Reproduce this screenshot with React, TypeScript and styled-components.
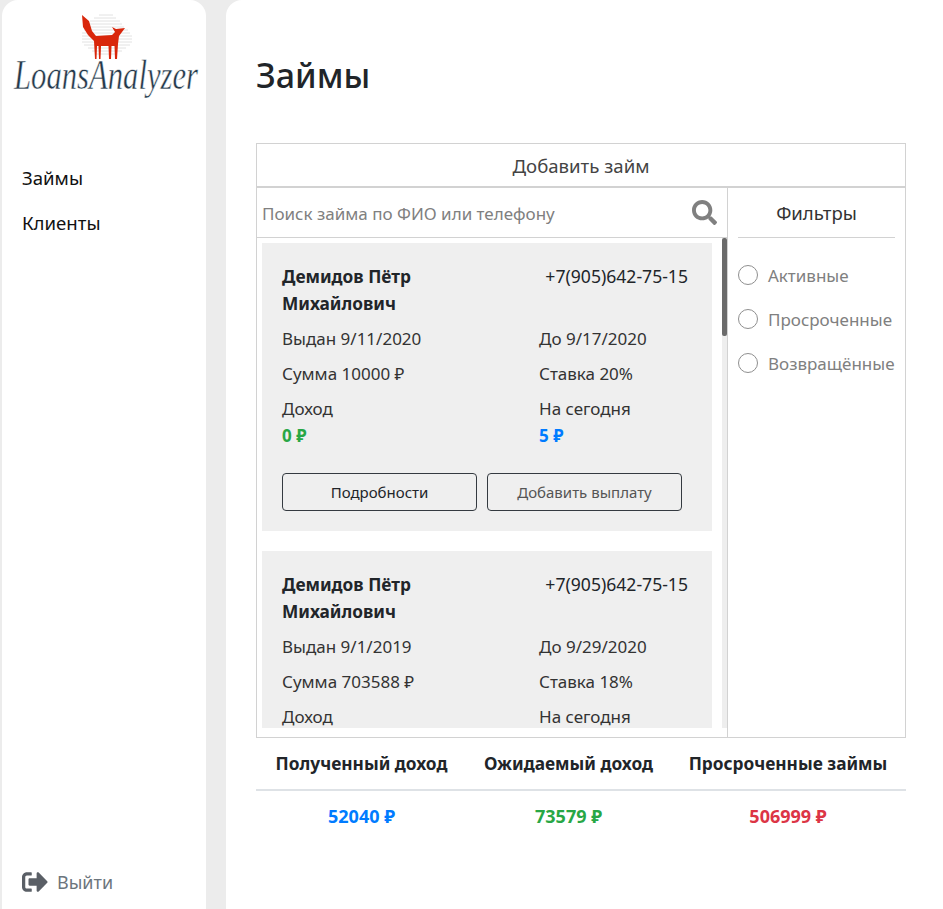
import styled, { createGlobalStyle } from 'styled-components'
import { FaSearch, FaSignOutAlt } from 'react-icons/fa'

const loans = [
	{ id: 1, issued: '9/11/2020', until: '9/17/2020', sum: 10000, rate: 20, income: 0, today: 5 },
	{ id: 2, issued: '9/1/2019', until: '9/29/2020', sum: 703588, rate: 18, income: 0, today: 12 },
]

const filters = ['Активные', 'Просроченные', 'Возвращённые']

function Logo() {
	return (
		<S.LogoSvg viewBox="0 0 204 110" aria-label="LoansAnalyzer">
			<g stroke="#e2e2e2" strokeWidth="1">
				<path d="M97 15h14M92 18h22M88 21h30M86 24h34M84 27h38M82 30h44M80 33h48M80 36h50M80 39h50M80 42h50M82 45h46M86 48h38M90 51h30M94 54h20" />
			</g>
			<path
				fill="#d9260b"
				d="M80 15 L87 21 L90 31 L94 36 L110 35 L113 32 L110 27 L114 29 L123 28 L117 36 L116 44 L115 59 L113 59 L112.5 46 L109.5 46 L109 59 L107 59 L106.5 46 L99 46 L98.5 59 L97 59 L96.5 46 L95 46 L94.5 59 L93 59 L92 41 L86 35 L81 27 Z"
			/>
			<S.LogoText x="12" y="89" textLength="184" lengthAdjust="spacingAndGlyphs">
				LoansAnalyzer
			</S.LogoText>
		</S.LogoSvg>
	)
}

function LoanCard({ loan }: { loan: (typeof loans)[number] }) {
	return (
		<S.Card>
			<S.CardHead>
				<S.ClientName>Демидов Пётр Михайлович</S.ClientName>
				<S.Phone>+7(905)642-75-15</S.Phone>
			</S.CardHead>
			<S.Fields>
				<S.Field>Выдан {loan.issued}</S.Field>
				<S.Field>До {loan.until}</S.Field>
				<S.Field>Сумма {loan.sum} ₽</S.Field>
				<S.Field>Ставка {loan.rate}%</S.Field>
				<S.Field>
					Доход
					<S.Money $color="#28a745">{loan.income} ₽</S.Money>
				</S.Field>
				<S.Field>
					На сегодня
					<S.Money $color="#007bff">{loan.today} ₽</S.Money>
				</S.Field>
			</S.Fields>
			<S.Buttons>
				<S.CardButton>Подробности</S.CardButton>
				<S.CardButton $muted>Добавить выплату</S.CardButton>
			</S.Buttons>
		</S.Card>
	)
}

export default function App() {
	return (
		<>
			<GlobalStyle />
			<S.Page>
				<S.Sidebar>
					<S.LogoWrap>
						<Logo />
					</S.LogoWrap>
					<S.Nav>
						<S.NavItem>Займы</S.NavItem>
						<S.NavItem>Клиенты</S.NavItem>
					</S.Nav>
					<S.Logout>
						<FaSignOutAlt size={26} />
						Выйти
					</S.Logout>
				</S.Sidebar>
				<S.Main>
					<S.Title>Займы</S.Title>
					<S.Panel>
						<S.AddLoan>Добавить займ</S.AddLoan>
						<S.Columns>
							<S.ListColumn>
								<S.Search>
									<S.SearchInput placeholder="Поиск займа по ФИО или телефону" />
									<FaSearch size={25} color="#808080" />
								</S.Search>
								<S.ListArea>
									<S.List>
										{loans.map((loan) => (
											<LoanCard key={loan.id} loan={loan} />
										))}
									</S.List>
									<S.ScrollTrack>
										<S.ScrollThumb />
									</S.ScrollTrack>
								</S.ListArea>
							</S.ListColumn>
							<S.FilterColumn>
								<S.FilterTitle>Фильтры</S.FilterTitle>
								{filters.map((name) => (
									<S.FilterRow key={name}>
										<S.Radio />
										{name}
									</S.FilterRow>
								))}
							</S.FilterColumn>
						</S.Columns>
					</S.Panel>
					<S.Stats>
						<S.StatHead>Полученный доход</S.StatHead>
						<S.StatHead>Ожидаемый доход</S.StatHead>
						<S.StatHead>Просроченные займы</S.StatHead>
						<S.StatValue $color="#007bff">52040 ₽</S.StatValue>
						<S.StatValue $color="#28a745">73579 ₽</S.StatValue>
						<S.StatValue $color="#dc3545">506999 ₽</S.StatValue>
					</S.Stats>
				</S.Main>
			</S.Page>
		</>
	)
}

const GlobalStyle = createGlobalStyle`
	html, body {
		margin: 0;
		height: 100%;
		overflow: hidden;
		background: #ececec;
	}
	* {
		box-sizing: border-box;
	}
	body {
		font-family: 'Noto Sans', 'Open Sans', sans-serif;
		color: #212529;
	}
`

const Page = styled.div`
	display: flex;
	height: 909px;
	padding-left: 2px;
	gap: 20px;
`

const Sidebar = styled.aside`
	width: 204px;
	background: #fff;
	border-radius: 16px 16px 0 0;
	display: flex;
	flex-direction: column;
`

const LogoWrap = styled.div`
	height: 110px;
`

const LogoSvg = styled.svg`
	display: block;
	width: 204px;
	height: 110px;
`

const LogoText = styled.text`
	font-family: 'Liberation Serif', serif;
	font-style: italic;
	font-size: 42px;
	fill: #24384a;
	stroke: #fff;
	stroke-width: 0.5px;
	paint-order: fill;
`

const Nav = styled.nav`
	display: flex;
	flex-direction: column;
	gap: 17px;
	padding: 54px 0 0 20px;
`

const NavItem = styled.div`
	font-size: 18.6px;
	line-height: 28px;
	color: #111;
`

const Logout = styled.div`
	margin-top: auto;
	display: flex;
	align-items: center;
	gap: 9px;
	padding: 0 0 13px 20px;
	font-size: 18px;
	line-height: 28px;
	color: #6c757d;
	svg {
		color: #5a5f66;
	}
`

const Main = styled.main`
	flex: 1;
	background: #fff;
	border-radius: 16px 0 0 0;
	padding: 0 0 0 30px;
`

const Title = styled.h1`
	margin: 0;
	padding-top: 52px;
	height: 143px;
	font-size: 34px;
	line-height: 46px;
	font-weight: 500;
	color: #212529;
`

const Panel = styled.section`
	width: 650px;
	height: 595px;
	border: 1px solid #d2d2d2;
	display: flex;
	flex-direction: column;
`

const AddLoan = styled.div`
	height: 44px;
	flex-shrink: 0;
	border-bottom: 2px solid #d2d2d2;
	display: flex;
	align-items: center;
	justify-content: center;
	font-size: 18.6px;
	color: #444;
`

const Columns = styled.div`
	flex: 1;
	min-height: 0;
	display: flex;
`

const ListColumn = styled.div`
	width: 471px;
	display: flex;
	flex-direction: column;
	border-right: 1px solid #d2d2d2;
`

const Search = styled.div`
	height: 50px;
	flex-shrink: 0;
	border-bottom: 1px solid #d2d2d2;
	display: flex;
	align-items: center;
	padding: 0 10px 0 5px;
`

const SearchInput = styled.input`
	flex: 1;
	border: none;
	outline: none;
	font: inherit;
	font-size: 17px;
	padding: 2px 0 0;
	&::placeholder {
		color: #808080;
		opacity: 1;
	}
`

const ListArea = styled.div`
	position: relative;
	flex: 1;
	min-height: 0;
	margin-bottom: 9px;
`

const List = styled.div`
	height: 100%;
	overflow: hidden;
	padding: 5px 0 0 5px;
`

// скроллбар рисуем сами: в скриншоте нативный не виден
const ScrollTrack = styled.div`
	position: absolute;
	top: 0;
	right: 0;
	bottom: 0;
	width: 5px;
	background: #eee;
`

const ScrollThumb = styled.div`
	height: 98px;
	background: #6b6b6b;
	border-radius: 2px;
`

const Card = styled.article`
	width: 450px;
	height: 288px;
	margin-bottom: 20px;
	padding: 20px;
	background: #efefef;
`

const CardHead = styled.div`
	display: flex;
	justify-content: space-between;
	align-items: flex-start;
`

const ClientName = styled.div`
	width: 180px;
	font-size: 17.3px;
	font-weight: 700;
	line-height: 27px;
	color: #212529;
`

const Phone = styled.div`
	font-size: 17.6px;
	line-height: 27px;
	margin-right: 4px;
`

const Fields = styled.div`
	display: grid;
	grid-template-columns: 257px 1fr;
	row-gap: 13px;
	margin-top: 11px;
`

const Field = styled.div`
	font-size: 17px;
	line-height: 22px;
	color: #333;
`

const Money = styled.div<{ $color: string }>`
	margin-top: 5px;
	font-weight: 700;
	color: ${({ $color }) => $color};
`

const Buttons = styled.div`
	display: flex;
	gap: 10px;
	margin-top: 26px;
`

const CardButton = styled.button<{ $muted?: boolean }>`
	width: 195px;
	height: 38px;
	border: 1px solid #343a40;
	border-radius: 4px;
	background: transparent;
	font-family: inherit;
	font-size: 15px;
	color: ${({ $muted }) => ($muted ? '#555' : '#212529')};
`

const FilterColumn = styled.div`
	flex: 1;
	padding: 0 10px;
`

const FilterTitle = styled.div`
	height: 50px;
	border-bottom: 1px solid #d2d2d2;
	margin-bottom: 15px;
	display: flex;
	align-items: center;
	justify-content: center;
	font-size: 18.6px;
	color: #333;
`

const FilterRow = styled.div`
	height: 44px;
	display: flex;
	align-items: center;
	gap: 10px;
	font-size: 17px;
	color: #808080;
	white-space: nowrap;
`

const Radio = styled.span`
	width: 20px;
	height: 20px;
	flex-shrink: 0;
	border: 1px solid #8f8f8f;
	border-radius: 50%;
`

const Stats = styled.section`
	width: 650px;
	display: grid;
	grid-template-columns: 211px 203px 236px;
`

const StatHead = styled.div`
	height: 53px;
	border-bottom: 2px solid #dee2e6;
	display: flex;
	align-items: center;
	justify-content: center;
	font-size: 17.3px;
	font-weight: 700;
	color: #212529;
	white-space: nowrap;
`

const StatValue = styled.div<{ $color: string }>`
	height: 50px;
	display: flex;
	align-items: center;
	justify-content: center;
	font-size: 18px;
	font-weight: 700;
	color: ${({ $color }) => $color};
`

const S = {
	Page,
	Sidebar,
	LogoWrap,
	LogoSvg,
	LogoText,
	Nav,
	NavItem,
	Logout,
	Main,
	Title,
	Panel,
	AddLoan,
	Columns,
	ListColumn,
	Search,
	SearchInput,
	ListArea,
	List,
	ScrollTrack,
	ScrollThumb,
	Card,
	CardHead,
	ClientName,
	Phone,
	Fields,
	Field,
	Money,
	Buttons,
	CardButton,
	FilterColumn,
	FilterTitle,
	FilterRow,
	Radio,
	Stats,
	StatHead,
	StatValue,
}
